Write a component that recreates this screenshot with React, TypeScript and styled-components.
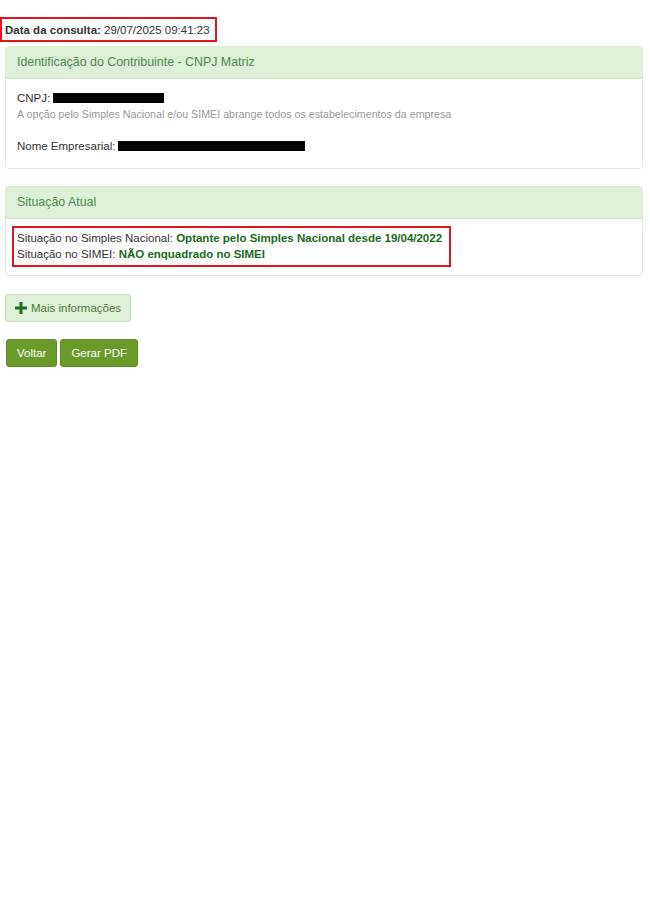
import styled, { createGlobalStyle } from "styled-components";

const GlobalStyle = createGlobalStyle`
  body {
    margin: 0;
    background: #fff;
    font-family: "Liberation Sans", Arial, sans-serif;
    font-size: 11.5px;
    color: #333;
  }
`;

const Page = styled.div`
  padding: 17px 7px 0 5px;
  display: flex;
  flex-direction: column;
  align-items: flex-start;
`;

const Highlight = styled.div`
  border: 2px solid #e3141f;
  line-height: 16px;
`;

const DateBox = styled(Highlight)`
  margin-left: -5px;
  margin-bottom: 4px;
  padding: 3px 5px 2px 3px;
`;

const Panel = styled.section<{ $mb?: number }>`
  width: 100%;
  box-sizing: border-box;
  border: 1px solid #dcebd2;
  border-radius: 4px;
  margin-bottom: ${(p) => p.$mb ?? 17}px;
  background: #fff;
  overflow: hidden;
`;

const PanelHeading = styled.div`
  background: #dff0d8;
  border-bottom: 1px solid #d3e6c8;
  color: #4d8a4a;
  font-size: 12.4px;
  height: 31px;
  line-height: 31px;
  padding: 0 11px;
`;

const PanelBody = styled.div<{ $pad: string }>`
  padding: ${(p) => p.$pad};
  line-height: 16px;
`;

const Note = styled.div`
  color: #999;
  font-size: 10.7px;
`;

const Field = styled.div<{ $mt?: number }>`
  margin-top: ${(p) => p.$mt ?? 0}px;
  display: flex;
  align-items: center;
`;

const Redacted = styled.span<{ $w: number }>`
  display: inline-block;
  width: ${(p) => p.$w}px;
  height: 10px;
  background: #000;
  margin-left: 3px;
`;

const Strong = styled.b`
  color: #1c6a1c;
`;

const SituacaoBox = styled(Highlight)`
  display: inline-block;
  padding: 2px 7px 3px 3px;
`;

const InfoButton = styled.button`
  margin-top: 1px;
  height: 28px;
  padding: 0 9px 0 9px;
  border: 1px solid #c9e2bb;
  border-radius: 3px;
  background: #dff0d8;
  color: #3f7c3a;
  font-family: "Liberation Sans", Arial, sans-serif;
  font-size: 11.5px;
  display: flex;
  align-items: center;
  gap: 4px;
`;

const Actions = styled.div`
  display: flex;
  gap: 3px;
  margin-top: 17px;
  margin-left: 1px;
`;

const ActionButton = styled.button`
  height: 28px;
  padding: 0 10px;
  border: 1px solid #5e8c22;
  border-radius: 3px;
  background: #6b9a2b;
  color: #fff;
  font-family: "Liberation Sans", Arial, sans-serif;
  font-size: 11.5px;
`;

const Plus = () => (
  <svg width="12" height="12" viewBox="0 0 12 12">
    <path d="M4.5 0h3v4.5H12v3H7.5V12h-3V7.5H0v-3h4.5z" fill="#1c6a1c" />
  </svg>
);

export default function App() {
  return (
    <>
      <GlobalStyle />
      <Page>
        <DateBox>
          <b>Data da consulta:</b> 29/07/2025 09:41:23
        </DateBox>
        <Panel>
          <PanelHeading>Identificação do Contribuinte - CNPJ Matriz</PanelHeading>
          <PanelBody $pad="11px 11px 14px">
            <Field>
              CNPJ: <Redacted $w={111} />
            </Field>
            <Note>A opção pelo Simples Nacional e/ou SIMEI abrange todos os estabelecimentos da empresa</Note>
            <Field $mt={16}>
              Nome Empresarial:<Redacted $w={187} />
            </Field>
          </PanelBody>
        </Panel>
        <Panel>
          <PanelHeading>Situação Atual</PanelHeading>
          <PanelBody $pad="7px 6px 8px">
            <SituacaoBox>
              Situação no Simples Nacional: <Strong>Optante pelo Simples Nacional desde 19/04/2022</Strong>
              <br />
              Situação no SIMEI: <Strong>NÃO enquadrado no SIMEI</Strong>
            </SituacaoBox>
          </PanelBody>
        </Panel>
        <InfoButton>
          <Plus />
          Mais informações
        </InfoButton>
        <Actions>
          <ActionButton>Voltar</ActionButton>
          <ActionButton>Gerar PDF</ActionButton>
        </Actions>
      </Page>
    </>
  );
}
